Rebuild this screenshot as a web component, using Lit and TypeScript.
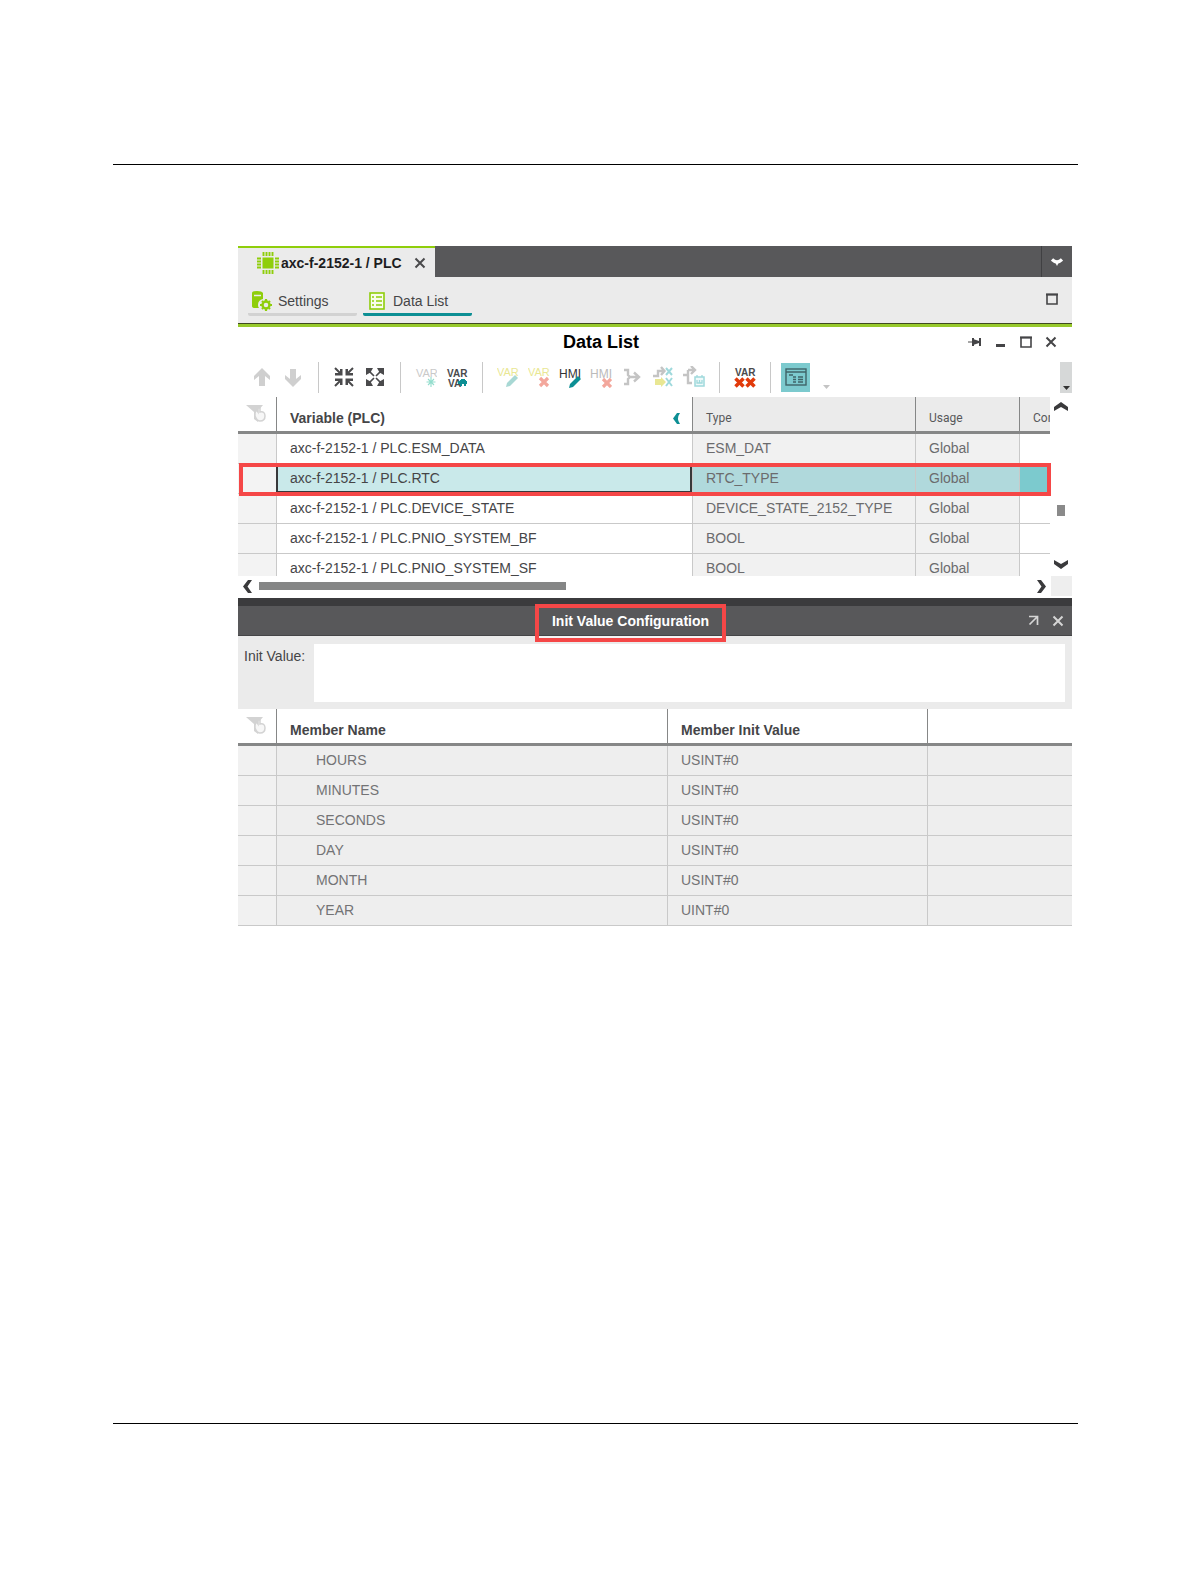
import { LitElement, html, css } from "lit";
import { customElement, state } from "lit/decorators.js";
import { classMap } from "lit/directives/class-map.js";

const G = "#8fce0b";
const T = "#0d8f94";
const D = "#4a4a4c";

const glyphs = {
  chip: html`<svg width="22" height="22" viewBox="0 0 22 22"><rect x="5.500" y="5.500" width="11" height="11" fill="${G}"/><path d="M6.500 0v4M9.500 0v4M12.500 0v4M15.500 0v4M6.500 18v4M9.500 18v4M12.500 18v4M15.500 18v4M0 6.500h4M0 9.500h4M0 12.500h4M0 15.500h4M18 6.500h4M18 9.500h4M18 12.500h4M18 15.500h4" stroke="${G}" stroke-width="1.900"/></svg>`,
  close: html`<svg width="12" height="12" viewBox="0 0 12 12"><path d="M1.500 1.500l9 9M10.500 1.500l-9 9" stroke="currentColor" stroke-width="2"/></svg>`,
  settings: html`<svg width="20" height="20" viewBox="0 0 20 20"><path d="M0 2q0-2 5-2t6 2v6q-5 1-5 6 0 2 1 3H3q-3 0-3-2z" fill="${G}"/><path d="M2 4.500h7" stroke="#ebebeb" stroke-width="1.500"/><circle cx="14" cy="14" r="3.500" fill="none" stroke="${G}" stroke-width="2.400"/><path d="M14 8v2M14 18v2M8 14h2M18 14h2M10 10l1 1M17 17l1 1M18 10l-1 1M11 17l-1 1" stroke="${G}" stroke-width="2.200"/></svg>`,
  list: html`<svg width="16" height="18" viewBox="0 0 16 18"><rect x="1" y="1" width="14" height="16" fill="#f8fceb" stroke="${G}" stroke-width="1.6"/><path d="M3 5h2M7 5h6M3 9h2M7 9h6M3 13h2M7 13h6" stroke="${G}" stroke-width="1.7"/></svg>`,
  square: html`<svg width="12" height="12" viewBox="0 0 12 12"><path d="M1 1.5h10V11H1z" fill="none" stroke="currentColor" stroke-width="1.6"/><path d="M0 1.5h12" stroke="currentColor" stroke-width="2"/></svg>`,
  dash: html`<svg width="12" height="12" viewBox="0 0 12 12"><path d="M1 9.5h9" stroke="currentColor" stroke-width="3"/></svg>`,
  pin: html`<svg width="14" height="12" viewBox="0 0 14 12"><path d="M0 6h5" stroke="#888" stroke-width="1.5"/><path d="M5 2v8" stroke="currentColor" stroke-width="2"/><path d="M5 3l6 2V2h2v8h-2V7l-6 2z" fill="currentColor"/></svg>`,
  down: html`<svg width="12" height="11" viewBox="0 0 12 11"><path d="M1 3.5q5 5 10 0" fill="none" stroke="currentColor" stroke-width="3.2"/><path d="M4 6h4l-2 4z" fill="currentColor"/></svg>`,
  chevDown: html`<svg width="14" height="9" viewBox="0 0 14 9"><path d="M0 0l7 4 7-4v4L7 9 0 4z" fill="currentColor"/></svg>`,
  chevUp: html`<svg width="14" height="9" viewBox="0 0 14 9"><path d="M0 9l7-4 7 4V5L7 0 0 5z" fill="currentColor"/></svg>`,
  chevLeft: html`<svg width="9" height="13" viewBox="0 0 9 13"><path d="M9 0L4.500 6.500 9 13H5L0 6.500 5 0z" fill="currentColor"/></svg>`,
  chevRight: html`<svg width="9" height="13" viewBox="0 0 9 13"><path d="M0 0l4.500 6.500L0 13h4l5-6.500L4 0z" fill="currentColor"/></svg>`,
  chevTeal: html`<svg width="7" height="11" viewBox="0 0 7 11"><path d="M7 0Q3 5.500 7 11H4L0 5.500 4 0z" fill="${T}"/></svg>`,
  popout: html`<svg width="11" height="11" viewBox="0 0 11 11"><path d="M1 1.500h8.500V10M9 2L1.500 9.500" fill="none" stroke="currentColor" stroke-width="1.700"/></svg>`,
  caret: html`<svg width="7" height="4" viewBox="0 0 7 4"><path d="M0 0h7L3.500 4z" fill="currentColor"/></svg>`,
  filter: html`<svg width="22" height="20" viewBox="0 0 22 20"><path d="M1 1h17l-5 6v11l-4-3V8z" fill="#d3d3d3"/><path d="M10 9q1-4 3-1V4h2v4q5-1 5 4 0 5-5 5-3 0-5-5z" fill="#f7f7f7" stroke="#d3d3d3" stroke-width="1.500"/></svg>`,
  arrowUp: html`<svg width="18" height="19" viewBox="0 0 18 19"><path d="M9 0l8 8v4l-5-4v10H6V8l-5 4V8z" fill="#cfcfcf"/></svg>`,
  arrowDown: html`<svg width="18" height="19" viewBox="0 0 18 19"><path d="M9 19l8-8V7l-5 4V1H6v10L1 7v4z" fill="#cfcfcf"/></svg>`,
  collapse: html`<svg width="20" height="20" viewBox="0 0 20 20"><path d="M1 1l6 6M19 1l-6 6M1 19l6-6M19 19l-6-6" stroke="${D}" stroke-width="2"/><path d="M8.500 2v6.500H1V6h5V2zM11.500 2v6.500H19V6h-5V2zM8.500 18v-6.500H1V14h5v4zM11.500 18v-6.500H19V14h-5v4z" fill="${D}"/></svg>`,
  expand: html`<svg width="20" height="20" viewBox="0 0 20 20"><path d="M2 2l7 7M18 2l-7 7M2 18l7-7M18 18l-7-7" stroke="${D}" stroke-width="1.700"/><path d="M1 1h7L5.500 5.500 1 8zM19 1h-7l2.500 4.500L19 8zM1 19h7l-2.500-4.500L1 12zM19 19h-7l2.500-4.500L19 12z" fill="${D}"/></svg>`,
  varAdd: html`<svg width="22" height="22" viewBox="0 0 22 22"><text x="1" y="11" class="g" fill="#c9c9c9">VAR</text><path d="M16 11v10M11.500 16h9M13 13l6 6M19 13l-6 6" stroke="#93ddcd" stroke-width="1.100"/></svg>`,
  varVar: html`<svg width="22" height="22" viewBox="0 0 22 22"><text x="1" y="11" class="g b" fill="${D}">VAR</text><text x="2" y="21" class="g b" fill="${D}">VA</text><path d="M12 15h2v-1h1v-1h4v1h1v1h1v3h-1v2h-2v-2h-2v2h-2v-2h-2z" fill="${T}"/></svg>`,
  varEdit: html`<svg width="22" height="22" viewBox="0 0 22 22"><text x="0" y="10" class="g" fill="#e9e793">VAR</text><path d="M9 21l1-4 8-8 3 3-8 8z" fill="#a8d8d4"/></svg>`,
  varDel: html`<svg width="22" height="22" viewBox="0 0 22 22"><text x="0" y="10" class="g" fill="#e9e793">VAR</text><path d="M12 12l8 8M20 12l-8 8" stroke="#f3a79c" stroke-width="3.200"/></svg>`,
  hmiEdit: html`<svg width="22" height="22" viewBox="0 0 22 22"><text x="0" y="12" class="g h" fill="#333">HMI</text><path d="M10 22l1-4 8-8 3 3-8 8z" fill="${T}"/></svg>`,
  hmiDel: html`<svg width="22" height="22" viewBox="0 0 22 22"><text x="0" y="12" class="g h" fill="#bbb">HMI</text><path d="M13 13l8 8M21 13l-8 8" stroke="#f3a79c" stroke-width="3.200"/></svg>`,
  merge: html`<svg width="20" height="18" viewBox="0 0 20 18"><path d="M2 2h4v5l2 2-2 2v5H2M8 9h9M12 4.500L17 9l-5 4.500" fill="none" stroke="#c4c4c4" stroke-width="2.400"/></svg>`,
  mapX: html`<svg width="22" height="22" viewBox="0 0 22 22"><path d="M1 10h5V5h6M9 1l3.500 4L9 9" fill="none" stroke="#c4c4c4" stroke-width="2.400"/><path d="M3 13h6v-2l5 5-5 5v-2H3z" fill="#e9e793"/><path d="M14 2l6 7M20 2l-6 7M14 12l6 8M20 12l-6 8" stroke="#9fd9dc" stroke-width="2"/></svg>`,
  mapList: html`<svg width="22" height="22" viewBox="0 0 22 22"><path d="M0 9h5M5 4h6M8 0l4 4-4 4M5 4v13h4" fill="none" stroke="#c4c4c4" stroke-width="2.400"/><rect x="12" y="11" width="9" height="9" fill="#effafa" stroke="#9fd9dc" stroke-width="1.500"/><path d="M14 11V9M19 11V9M14 14v3h5v-3M16.500 14v3" fill="none" stroke="#9fd9dc" stroke-width="1.300"/></svg>`,
  varXX: html`<svg width="22" height="22" viewBox="0 0 22 22"><text x="1" y="10" class="g b" fill="${D}">VAR</text><path d="M1.500 12.500l8 8M9.500 12.500l-8 8M12.500 12.500l8 8M20.500 12.500l-8 8" stroke="#e23a0a" stroke-width="3.500"/></svg>`,
  form: html`<svg width="22" height="18" viewBox="0 0 22 18"><rect x="1" y="1" width="20" height="16" fill="none" stroke="#3f6468" stroke-width="1.400"/><path d="M1 4h20M4 7h4M8 9h3M8 11.500h3M8 14h3M13 9h5M13 11.500h5M13 14h5" stroke="#3f6468" stroke-width="1.500"/></svg>`,
};

interface Variable {
  name: string;
  type: string;
}

interface Member {
  name: string;
  value: string;
}

const variables: Variable[] = [
  { name: "ESM_DATA", type: "ESM_DAT" },
  { name: "RTC", type: "RTC_TYPE" },
  { name: "DEVICE_STATE", type: "DEVICE_STATE_2152_TYPE" },
  { name: "PNIO_SYSTEM_BF", type: "BOOL" },
  { name: "PNIO_SYSTEM_SF", type: "BOOL" },
];

const members: Member[] = [
  { name: "HOURS", value: "USINT#0" },
  { name: "MINUTES", value: "USINT#0" },
  { name: "SECONDS", value: "USINT#0" },
  { name: "DAY", value: "USINT#0" },
  { name: "MONTH", value: "USINT#0" },
  { name: "YEAR", value: "UINT#0" },
];

const tools = [
  ["arrowUp", "arrowDown"],
  ["collapse", "expand"],
  ["varAdd", "varVar"],
  ["varEdit", "varDel", "hmiEdit", "hmiDel", "merge", "mapX", "mapList"],
  ["varXX"],
] as const;

const labels: Record<string, string> = {
  arrowUp: "Move up",
  arrowDown: "Move down",
  collapse: "Collapse all",
  expand: "Expand all",
  varAdd: "Add variable",
  varVar: "Add system variable",
  varEdit: "Edit variable",
  varDel: "Delete variable",
  hmiEdit: "Set HMI tag",
  hmiDel: "Remove HMI tag",
  merge: "Merge",
  mapX: "Map variable",
  mapList: "Map list",
  varXX: "Remove unused variables",
};

@customElement("app-root")
export class AppRoot extends LitElement {
  @state() private selected = "RTC";

  static styles = css`
    :host {
      display: block;
      background: #fff;
      color: #454547;
      font: 14px/20px "Liberation Sans", Arial, sans-serif;
    }
    * {
      box-sizing: border-box;
    }
    svg {
      display: block;
      flex: none;
    }
    .g {
      font: 11px "Liberation Sans Narrow", "Liberation Sans", sans-serif;
    }
    .b {
      font-weight: 700;
      font-size: 10px;
    }
    .h {
      font-size: 12px;
    }
    button {
      border: 0;
      padding: 0;
      margin: 0;
      background: none;
      color: inherit;
      font: inherit;
      display: flex;
      align-items: center;
      justify-content: center;
    }
    .page {
      display: flex;
      flex-direction: column;
      min-height: 100vh;
      padding: 164px 112px 158px 113px;
    }
    .sheet {
      flex: 1;
      border: solid #000;
      border-width: 1px 0;
      padding: 81px 6px 80px 125px;
    }
    .tabs {
      display: flex;
      height: 31px;
      background: #58585a;
      color: #fff;
    }
    .tab {
      display: flex;
      align-items: center;
      gap: 12px;
      width: 197px;
      padding-left: 19px;
      background: #ebebeb;
      border-top: 2px solid #8fce0b;
      color: #1d1d1f;
      font-weight: 700;
    }
    .tab-link {
      justify-content: flex-start;
      gap: 2px;
      white-space: nowrap;
    }
    .tab-close {
      color: #4a4a4c;
    }
    .tab-menu {
      width: 31px;
      margin-left: auto;
      border-left: 1px solid #404042;
    }
    .views {
      display: flex;
      align-items: flex-start;
      gap: 6px;
      height: 50px;
      padding: 12px 14px 0 10px;
      background: #ebebeb;
      border-bottom: 3px solid #97c92b;
      box-shadow: inset 0 -1px #3f4a20;
    }
    .view {
      gap: 6px;
      width: 109px;
      height: 27px;
      padding: 0 4px;
      justify-content: flex-start;
      border-bottom: 3px solid #d2d2d2;
      border-radius: 2px;
    }
    .view.on {
      gap: 8px;
      padding-left: 6px;
      border-color: #0d8f94;
    }
    .restore {
      margin: 4px 0 0 auto;
    }
    .title {
      display: flex;
      align-items: center;
      height: 30px;
    }
    h1 {
      flex: 1;
      margin: 0;
      text-align: center;
      color: #000;
      font-size: 18px;
      line-height: 24px;
    }
    .window {
      display: flex;
      gap: 13px;
      width: 108px;
      padding-left: 4px;
    }
    .toolbar {
      display: flex;
      align-items: center;
      height: 40px;
      padding-left: 8px;
    }
    .group {
      display: flex;
      align-items: center;
      height: 31px;
      padding-right: 10px;
      margin-right: 9px;
      border-right: 1px solid #c8c8c8;
    }
    .tool {
      width: 31px;
      height: 29px;
    }
    .tool.on {
      width: 29px;
      background: #7ccace;
      margin-left: 1px;
    }
    .more {
      width: 32px;
      height: 29px;
      color: #c4c4c4;
      padding-top: 20px;
    }
    .overflow {
      align-self: stretch;
      align-items: flex-end;
      width: 12px;
      margin: 5px 0 4px auto;
      padding-bottom: 3px;
      background: #d6d8d8;
      color: #333;
    }
    .grid {
      position: relative;
      display: flex;
      height: 179px;
    }
    .clip {
      flex: 1;
      min-width: 0;
      overflow: hidden;
    }
    .vbar {
      display: flex;
      flex-direction: column;
      justify-content: space-between;
      align-items: center;
      width: 22px;
      padding: 5px 0 7px;
      color: #3a3a3c;
    }
    .vthumb {
      width: 8px;
      height: 11px;
      margin-top: 86px;
      margin-bottom: 36px;
      background: #8a8a8a;
    }
    .hbar {
      display: flex;
      align-items: center;
      height: 22px;
      padding: 0 0 2px 5px;
      color: #3a3a3c;
    }
    .hthumb {
      width: 37%;
      height: 8px;
      margin-left: 7px;
      background: #858686;
    }
    .hend {
      margin-left: auto;
    }
    .corner {
      align-self: flex-start;
      width: 21px;
      height: 20px;
      margin-left: 5px;
      background: #eee;
    }
    table {
      width: 100%;
      table-layout: fixed;
      border-collapse: separate;
      border-spacing: 0;
    }
    th {
      height: 37px;
      padding: 8px 0 0 13px;
      border-bottom: 3px solid #868787;
      border-left: 1px solid #868787;
      text-align: left;
      white-space: nowrap;
      overflow: hidden;
    }
    th:first-child {
      padding: 0 0 0 7px;
      border-left: 0;
    }
    td {
      height: 30px;
      padding: 0 0 1px 13px;
      border-bottom: 1px solid #c9c9c9;
      border-left: 1px solid #c9c9c9;
      white-space: nowrap;
      overflow: hidden;
    }
    .gutter {
      background: #f3f3f3;
      border-left: 0;
    }
    .c-gutter {
      width: 38px;
    }
    .c-type {
      width: 223px;
    }
    .c-usage {
      width: 104px;
    }
    .c-comment {
      width: 31px;
    }
    .c-name {
      width: 391px;
    }
    .c-value {
      width: 260px;
    }
    .plain {
      background: #ebebeb;
      color: #58585a;
      font: 12px/20px Roboto, sans-serif;
    }
    .head {
      display: flex;
      align-items: center;
      justify-content: space-between;
      padding-right: 12px;
    }
    .dim {
      background: #f1f1f1;
      color: #6b6b6d;
    }
    .row-on .name {
      padding: 0 0 0 12px;
      background: #c9e9ea;
      border: solid #38383a;
      border-width: 0 2px 3px 2px;
    }
    .row-on .dim {
      background: #b0d9dc;
    }
    .row-on .comment {
      background: #7ccace;
    }
    .mark {
      position: absolute;
      border: 4px solid #f54747;
      pointer-events: none;
    }
    .mark-row {
      left: 1px;
      right: 21px;
      top: 66px;
      height: 33px;
    }
    .mark-title {
      inset: -2px -17px -7px -17px;
      border-width: 4px;
      box-shadow: inset 0 -2px #f4f4f4;
    }
    .panel {
      display: flex;
      height: 38px;
      border-top: 8px solid #3b3b3d;
      border-bottom: 1px solid #454547;
      background: #58585a;
      color: #fff;
    }
    .panel-title {
      flex: 1;
      display: flex;
      justify-content: center;
    }
    h2 {
      position: relative;
      margin: 0;
      font-size: 14px;
      line-height: 30px;
    }
    .panel-tools {
      display: flex;
      gap: 13px;
      width: 49px;
      padding-left: 5px;
      color: #d5d5d5;
    }
    .init {
      display: flex;
      gap: 9px;
      padding: 8px 7px 7px 6px;
      background: #ebebeb;
    }
    .init label {
      padding-top: 2px;
      white-space: nowrap;
    }
    textarea {
      flex: 1;
      height: 58px;
      padding: 4px;
      border: 0;
      background: #fff;
      font: inherit;
      resize: none;
    }
    .members td {
      background: #eee;
      color: #737375;
    }
    .members .gutter {
      background: #f1f1f1;
    }
    .members .member {
      padding-left: 39px;
    }
  `;

  private renderVariable(v: Variable) {
    return html`<tr
      class=${classMap({ "row-on": v.name === this.selected })}
      @click=${() => (this.selected = v.name)}
    >
      <td class="gutter"></td>
      <td class="name">axc-f-2152-1 / PLC.${v.name}</td>
      <td class="dim">${v.type}</td>
      <td class="dim">Global</td>
      <td class="comment"></td>
    </tr>`;
  }

  render() {
    return html`<div class="page">
      <main class="sheet">
        <div class="tabs">
          <div class="tab">
            <button class="tab-link">${glyphs.chip}axc-f-2152-1 / PLC</button>
            <button class="tab-close" aria-label="Close tab">${glyphs.close}</button>
          </div>
          <button class="tab-menu" aria-label="Open tabs">${glyphs.down}</button>
        </div>
        <nav class="views">
          <button class="view">${glyphs.settings}Settings</button>
          <button class="view on">${glyphs.list}Data List</button>
          <button class="restore" aria-label="Maximize">${glyphs.square}</button>
        </nav>

        <section>
          <header class="title">
            <h1>Data List</h1>
            <div class="window">
              <button aria-label="Pin">${glyphs.pin}</button>
              <button aria-label="Minimize">${glyphs.dash}</button>
              <button aria-label="Maximize">${glyphs.square}</button>
              <button aria-label="Close">${glyphs.close}</button>
            </div>
          </header>
          <div class="toolbar">
            ${tools.map(
              (group) => html`<div class="group">
                ${group.map(
                  (id) => html`<button class="tool" aria-label=${labels[id]}>${glyphs[id]}</button>`
                )}
              </div>`
            )}
            <button class="tool on" aria-label="Init value configuration">${glyphs.form}</button>
            <button class="more" aria-label="More">${glyphs.caret}</button>
            <button class="overflow" aria-label="Toolbar options">${glyphs.caret}</button>
          </div>
          <div class="grid">
            <div class="clip">
              <table>
                <colgroup>
                  <col class="c-gutter" />
                  <col />
                  <col class="c-type" />
                  <col class="c-usage" />
                  <col class="c-comment" />
                </colgroup>
                <thead>
                  <tr>
                    <th><button aria-label="Filter">${glyphs.filter}</button></th>
                    <th><div class="head">Variable (PLC) ${glyphs.chevTeal}</div></th>
                    <th class="plain">Type</th>
                    <th class="plain">Usage</th>
                    <th class="plain">Comment</th>
                  </tr>
                </thead>
                <tbody>
                  ${variables.map((v) => this.renderVariable(v))}
                </tbody>
              </table>
            </div>
            <div class="vbar">
              <button aria-label="Scroll up">${glyphs.chevUp}</button>
              <div class="vthumb"></div>
              <button aria-label="Scroll down">${glyphs.chevDown}</button>
            </div>
            <div class="mark mark-row"></div>
          </div>
          <div class="hbar">
            <button aria-label="Scroll left">${glyphs.chevLeft}</button>
            <div class="hthumb"></div>
            <button class="hend" aria-label="Scroll right">${glyphs.chevRight}</button>
            <div class="corner"></div>
          </div>
        </section>

        <section>
          <header class="panel">
            <div class="panel-title">
              <h2>Init Value Configuration<span class="mark mark-title"></span></h2>
            </div>
            <div class="panel-tools">
              <button aria-label="Undock">${glyphs.popout}</button>
              <button aria-label="Close panel">${glyphs.close}</button>
            </div>
          </header>
          <div class="init">
            <label for="init">Init Value:</label>
            <textarea id="init"></textarea>
          </div>
          <table class="members">
            <colgroup>
              <col class="c-gutter" />
              <col class="c-name" />
              <col class="c-value" />
              <col />
            </colgroup>
            <thead>
              <tr>
                <th><button aria-label="Filter">${glyphs.filter}</button></th>
                <th>Member Name</th>
                <th>Member Init Value</th>
                <th></th>
              </tr>
            </thead>
            <tbody>
              ${members.map(
                (m) => html`<tr>
                  <td class="gutter"></td>
                  <td class="member">${m.name}</td>
                  <td>${m.value}</td>
                  <td></td>
                </tr>`
              )}
            </tbody>
          </table>
        </section>
      </main>
    </div>`;
  }
}
